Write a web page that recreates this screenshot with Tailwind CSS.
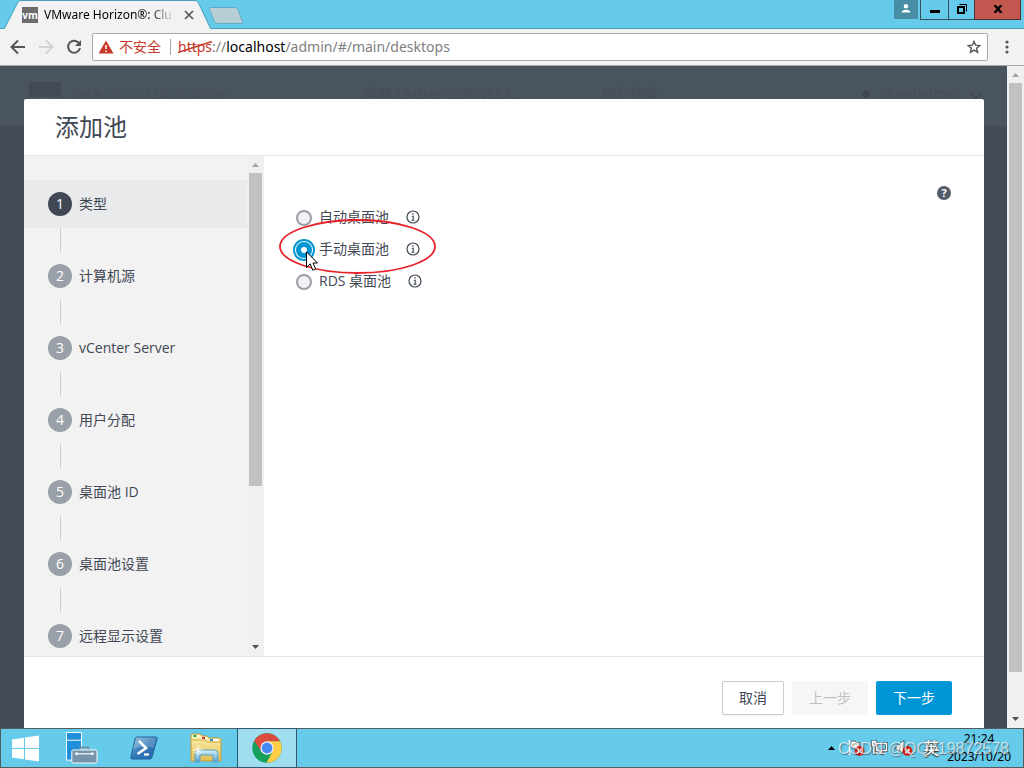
<!DOCTYPE html>
<html lang="zh-CN">
<head>
<meta charset="utf-8">
<title>VMware Horizon®: Cluster</title>
<script src="https://cdn.jsdelivr.net/npm/@tailwindcss/browser@4"></script>
</head>
<body class="flex h-screen flex-col overflow-hidden bg-[#66caea] font-['Open_Sans','Noto_Sans_CJK_SC',sans-serif] text-sm text-[#3f4854]">

<!-- Browser tab strip -->
<header class="relative flex h-7 shrink-0 items-start justify-between">
  <svg class="absolute left-0 top-0 h-[29px] w-full" aria-hidden="true">
    <path d="M-2 28.500H4.500L18 2Q19 .5 21 .5H195Q197.500 .5 198.500 3L210.500 28.500H3000V32H-2Z" fill="#f2f2f2" stroke="#4a9fbd"/>
    <path d="M211 7.500H235Q237 7.500 238 9.500L242.500 21.500Q243 23.500 241 23.500H217.500Q215.500 23.500 214.500 21.500L209.500 9.500Q209 7.500 211 7.500Z" fill="#b8ced6" stroke="#5fabc5"/>
  </svg>
  <div class="relative flex h-7 items-center pl-[22px] pt-0.5">
    <div class="flex size-4 items-center justify-center bg-[#6c6c6c] font-['Open_Sans',sans-serif] text-[10px] font-bold text-white">vm</div>
    <div class="ml-1.5 w-[131px] overflow-hidden whitespace-nowrap bg-linear-to-r from-black from-80% to-transparent bg-clip-text font-['Noto_Sans',sans-serif] text-xs text-transparent">VMware Horizon®: Clu</div>
    <button class="ml-[9px] size-2.5" aria-label="关闭标签页"><svg viewBox="0 0 10 10" stroke="#555" stroke-width="1.700"><path d="M1 1l8 8M9 1l-8 8"/></svg></button>
  </div>
  <div class="relative flex pr-[3px]">
    <button class="mr-0.5 flex h-[19px] w-6 justify-center bg-[#478ea5] pt-1" aria-label="用户"><svg class="size-2.5" viewBox="0 0 10 10" fill="#fff"><circle cx="5" cy="2.200" r="2.200"/><path d="M.5 8.500Q1 5.700 5 5.700T9.500 8.500Z"/></svg></button>
    <button class="flex h-5 w-[29px] justify-center border border-t-0 border-[#31515d] pt-2.5" aria-label="最小化"><span class="h-[3px] w-2.5 bg-black"></span></button>
    <button class="flex h-5 w-[25px] justify-center border-b border-[#31515d] pt-1" aria-label="还原"><svg class="size-2.5" viewBox="0 0 10 10" fill="none" stroke="#000"><path d="M1 3h6v6H1Z" stroke-width="2"/><path d="M2.500 .5h7v7"/></svg></button>
    <button class="flex h-5 w-[47px] justify-center border border-t-0 border-[#4b3433] bg-[#c35850] pt-[5px]" aria-label="关闭"><svg class="h-2 w-2.5" viewBox="0 0 10 8" stroke="#000" stroke-width="2.300"><path d="M1.500 0l7 8M8.500 0l-7 8"/></svg></button>
  </div>
</header>

<!-- Address bar -->
<nav class="flex h-[38px] shrink-0 items-center border-b border-[#aaa] bg-[#f2f2f2] pl-2.5 pr-[13px] [clip-path:inset(1px_0_0_0)]">
  <button aria-label="后退"><svg class="size-4" viewBox="0 0 16 16" fill="none" stroke="#555" stroke-width="2"><path d="M15 8H2M8 1.500L1.500 8L8 14.500"/></svg></button>
  <button class="ml-3" aria-label="前进" disabled><svg class="size-4" viewBox="0 0 16 16" fill="none" stroke="#d2d2d2" stroke-width="2"><path d="M1 8H14M8 1.500L14.500 8L8 14.500"/></svg></button>
  <button class="ml-3" aria-label="刷新"><svg class="size-4" viewBox="0 0 16 16" fill="none" stroke="#555" stroke-width="2"><path d="M13.200 4.500A6 6 0 1 0 14 9"/><path d="M15 1v6H9Z" fill="#555" stroke="none"/></svg></button>
  <div class="ml-2.5 flex h-7 flex-1 items-center rounded-xs border border-[#a8a8a8] bg-white pl-[5px] pr-1.5">
    <svg class="h-3.5 w-4" viewBox="0 0 16 14"><path d="M8 0.500L15.500 13.500H.5Z" fill="#c5392a"/><path d="M8 5v4M8 10.500v1.500" stroke="#fff" stroke-width="1.500"/></svg>
    <span class="ml-[5px] text-[#c5392a]">不安全</span>
    <span class="ml-[9px] h-4 w-px bg-[#aaa]"></span>
    <span class="relative ml-[7px] whitespace-nowrap font-['Noto_Sans',sans-serif] text-[#808080]"><span class="text-[#c5392a]">https</span>://<span class="text-black">localhost</span>/admin/#/main/desktops<svg class="absolute left-0 top-1 h-3 w-9" viewBox="0 0 36 12" stroke="#c5392a" stroke-width="1.600"><path d="M0 11.500L34 .5"/></svg></span>
    <button class="ml-auto" aria-label="收藏"><svg class="size-3.5" viewBox="0 0 14 14" fill="none" stroke="#555" stroke-width="1.400"><path d="M7 1.500L8.600 5.200L12.800 5.500L9.600 8.200L10.600 12.300L7 10.100L3.400 12.300L4.400 8.200L1.200 5.500L5.400 5.200Z"/></svg></button>
  </div>
  <button class="ml-[15px] w-2" aria-label="菜单"><svg viewBox="0 0 8 14" fill="#555"><circle cx="4" cy="2" r="1.600"/><circle cx="4" cy="7" r="1.600"/><circle cx="4" cy="12" r="1.600"/></svg></button>
</nav>

<!-- Page -->
<main class="flex min-h-0 flex-1">
  <div class="relative flex min-w-0 flex-1 flex-col bg-[#434c56] pl-6 pr-[23px] pt-[33px]">
    <!-- Dimmed application header behind the dialog -->
    <div class="absolute inset-x-0 top-0 flex h-[60px] items-start overflow-hidden bg-[#4a545e] pl-[29px] pt-4 text-[#444d58]" aria-hidden="true">
      <div class="flex size-8 items-end justify-center rounded-xs bg-[#424b55] pb-1.5 text-xs font-bold text-[#525c66]">vmw</div>
      <div class="ml-3 w-[291px] pt-0.5 text-lg">VMware Horizon®</div>
      <div class="w-[238px] pt-0.5 text-sm">容器 Cluster-CONNECT...</div>
      <div class="w-[257px] pt-0.5 text-sm">用户搜索</div>
      <svg class="mt-2 size-3.5" viewBox="0 0 14 14" fill="#3d4650"><circle cx="7" cy="4" r="3.500"/><path d="M1 13q0-4 6-4t6 4Z"/></svg>
      <div class="ml-2 pt-0.5 text-sm">cloudadmin</div>
      <svg class="ml-3 mt-2 h-3 w-3" viewBox="0 0 12 12" fill="none" stroke="#3d4650" stroke-width="1.500"><path d="M1 3l5 5l5-5"/></svg>
    </div>

    <section role="dialog" aria-labelledby="title" class="relative flex min-h-0 flex-1 flex-col rounded-t-xs bg-white">
      <h1 id="title" class="flex h-14 shrink-0 items-center pl-[31px] text-2xl font-normal">添加池</h1>
      <div class="flex min-h-0 flex-1 border-y border-[#e6e6e6]">
        <!-- Wizard steps -->
        <aside class="flex w-60 shrink-0 bg-[#f2f2f2]">
          <ol class="flex-1 overflow-hidden pt-6">
            <li class="flex h-12 items-center gap-[7px] bg-[#e8eaeb] pl-6"><span class="flex size-6 items-center justify-center rounded-full bg-[#3f4854] font-medium text-white">1</span><a href="#type">类型</a></li>
            <li class="ml-9 h-6 border-l border-[#ccc]"></li>
            <li class="flex h-12 items-center gap-[7px] pl-6"><span class="flex size-6 items-center justify-center rounded-full bg-[#9aa0a7] font-medium text-white">2</span><a href="#source">计算机源</a></li>
            <li class="ml-9 h-6 border-l border-[#ccc]"></li>
            <li class="flex h-12 items-center gap-[7px] pl-6"><span class="flex size-6 items-center justify-center rounded-full bg-[#9aa0a7] font-medium text-white">3</span><a href="#vcenter">vCenter Server</a></li>
            <li class="ml-9 h-6 border-l border-[#ccc]"></li>
            <li class="flex h-12 items-center gap-[7px] pl-6"><span class="flex size-6 items-center justify-center rounded-full bg-[#9aa0a7] font-medium text-white">4</span><a href="#users">用户分配</a></li>
            <li class="ml-9 h-6 border-l border-[#ccc]"></li>
            <li class="flex h-12 items-center gap-[7px] pl-6"><span class="flex size-6 items-center justify-center rounded-full bg-[#9aa0a7] font-medium text-white">5</span><a href="#id">桌面池 ID</a></li>
            <li class="ml-9 h-6 border-l border-[#ccc]"></li>
            <li class="flex h-12 items-center gap-[7px] pl-6"><span class="flex size-6 items-center justify-center rounded-full bg-[#9aa0a7] font-medium text-white">6</span><a href="#settings">桌面池设置</a></li>
            <li class="ml-9 h-6 border-l border-[#ccc]"></li>
            <li class="flex h-12 items-center gap-[7px] pl-6"><span class="flex size-6 items-center justify-center rounded-full bg-[#9aa0a7] font-medium text-white">7</span><a href="#display">远程显示设置</a></li>
          </ol>
          <div class="flex w-[17px] flex-col items-center bg-[#f0f0f0]">
            <svg class="h-[17px] w-[7px] shrink-0" viewBox="0 0 7 17" fill="#a3a3a3"><path d="M0 11L3.500 7L7 11Z"/></svg>
            <div class="h-[313px] w-[13px] bg-[#c1c1c1]"></div>
            <svg class="mt-auto h-[17px] w-[7px] shrink-0" viewBox="0 0 7 17" fill="#505050"><path d="M0 6L3.500 10L7 6Z"/></svg>
          </div>
        </aside>

        <!-- Pool type -->
        <div class="relative flex flex-1 justify-between pl-8 pr-[33px] pt-[30px]">
          <fieldset class="flex flex-col pt-[15px]">
            <div class="flex h-8 items-center">
              <input id="auto" name="pool" type="radio" class="mt-0.5 size-4 appearance-none rounded-full border-2 border-[#9a9fa7] bg-[#f2f2f2]">
              <label for="auto" class="ml-[7px] mr-[17px]">自动桌面池</label>
              <button aria-label="自动桌面池信息"><svg class="size-3.5" viewBox="0 0 14 14" fill="none" stroke="#3f4854"><circle cx="7" cy="7" r="6" stroke-width="1.200"/><path d="M5.800 6.200H7.200V10M5.500 10.300h3M6.200 3.900h1.500" stroke-width="1.100"/></svg></button>
            </div>
            <div class="flex h-8 items-center">
              <input id="manual" name="pool" type="radio" checked class="mt-0.5 size-4 appearance-none rounded-full border-[5px] border-[#0095d3] bg-white shadow-[0_0_0_1px_#fff,0_0_0_3px_#0095d3]">
              <label for="manual" class="ml-[7px] mr-[17px]">手动桌面池</label>
              <button aria-label="手动桌面池信息"><svg class="size-3.5" viewBox="0 0 14 14" fill="none" stroke="#3f4854"><circle cx="7" cy="7" r="6" stroke-width="1.200"/><path d="M5.800 6.200H7.200V10M5.500 10.300h3M6.200 3.900h1.500" stroke-width="1.100"/></svg></button>
            </div>
            <div class="flex h-8 items-center">
              <input id="rds" name="pool" type="radio" class="mt-0.5 size-4 appearance-none rounded-full border-2 border-[#9a9fa7] bg-[#f2f2f2]">
              <label for="rds" class="ml-[7px] mr-[17px]">RDS 桌面池</label>
              <button aria-label="RDS 桌面池信息"><svg class="size-3.5" viewBox="0 0 14 14" fill="none" stroke="#3f4854"><circle cx="7" cy="7" r="6" stroke-width="1.200"/><path d="M5.800 6.200H7.200V10M5.500 10.300h3M6.200 3.900h1.500" stroke-width="1.100"/></svg></button>
            </div>
          </fieldset>
          <button class="flex size-3.5 items-center justify-center rounded-full bg-[#545c67] text-[11px] font-bold text-white" aria-label="帮助">?</button>
          <svg class="pointer-events-none absolute left-3.5 top-[62px] h-14 w-40" viewBox="0 0 160 56" fill="none" aria-hidden="true"><ellipse cx="79.500" cy="28.500" rx="77.500" ry="26.500" stroke="#e8212a" stroke-width="1.800"/></svg>
          <svg class="pointer-events-none absolute left-[42px] top-[95px] h-[21px] w-3" viewBox="0 0 12 21" aria-hidden="true"><path d="M.5 .8V16.500L4.200 12.800L6.800 19.200L9.600 18L7 12H11.500Z" fill="#fff" stroke="#000"/></svg>
        </div>
      </div>
      <footer class="flex h-[71px] shrink-0 items-start justify-end gap-2 pr-8 pt-6">
        <button class="h-[34px] rounded-xs border border-[#ccc] bg-white px-4 shadow-xs">取消</button>
        <button class="h-[34px] rounded-xs bg-[#f6f6f6] px-[17px] text-[#bfc1c4]" disabled>上一步</button>
        <button class="h-[34px] rounded-xs bg-[#0095d6] px-[17px] text-white">下一步</button>
      </footer>
    </section>
  </div>
  <div class="flex w-[17px] shrink-0 flex-col items-center bg-[#f0f0f0]">
    <svg class="h-[17px] w-[7px] shrink-0" viewBox="0 0 7 17" fill="#a3a3a3"><path d="M0 11L3.500 7L7 11Z"/></svg>
    <div class="mb-[39px] w-[13px] flex-1 bg-[#c1c1c1]"></div>
    <svg class="h-[17px] w-[7px] shrink-0" viewBox="0 0 7 17" fill="#505050"><path d="M0 6L3.500 10L7 6Z"/></svg>
  </div>
</main>

<!-- Windows taskbar -->
<footer class="relative flex h-10 shrink-0 items-center border border-[#555c60] bg-[#66caea]">
  <button class="ml-[11px]" aria-label="开始"><svg class="h-[27px] w-7" viewBox="0 0 28 27" fill="#fff"><path d="M0 4.500L12 2.700V13H0ZM13 2.500L27 .5V13H13ZM0 14H12V24.300L0 22.500ZM13 14H27V26.500L13 24.500Z"/></svg></button>
  <button class="ml-[26px]" aria-label="服务器管理器"><svg class="size-8" viewBox="0 0 33 33" stroke="#fff"><path d="M.5 .5H16V29H.5Z" fill="#2090db"/><path d="M.5 8.500H16"/><path d="M15 19v-3h8v3" fill="none" stroke="#7494aa" stroke-width="2"/><rect x="6" y="18.500" width="26" height="13.500" rx="1.500" fill="#7494aa"/><path d="M9 22.500H29" stroke-width="1.200"/><path d="M11 21v3M27 21v3" stroke-width="1.500"/></svg></button>
  <button class="ml-8" aria-label="PowerShell"><svg class="h-6 w-7" viewBox="0 0 28 24"><defs><linearGradient id="ps" x1="0" x2="1" y1="0" y2="1"><stop stop-color="#8ebedd"/><stop offset=".5" stop-color="#3178b7"/><stop offset="1" stop-color="#2760ac"/></linearGradient></defs><path d="M7 1H26Q27.500 1 27 3L22 21Q21.500 23 20 23H2Q.5 23 1 21L5 3Q5.500 1 7 1Z" fill="url(#ps)" stroke="#20639c"/><path d="M7 1.500H26.500L23.500 12Q12 9 2.500 13Z" fill="#fff" opacity=".2"/><path d="M9 5L16 12L7.500 18" fill="none" stroke="#fff" stroke-width="2.600"/><path d="M14 18.500H19" stroke="#fff" stroke-width="2.300"/></svg></button>
  <button class="ml-8" aria-label="文件资源管理器"><svg class="h-[30px] w-8" viewBox="0 0 32 30"><defs><linearGradient id="fo" x2="0" y2="1"><stop stop-color="#fff4b5"/><stop offset="1" stop-color="#e4be51"/></linearGradient><linearGradient id="st" x2="0" y2="1"><stop stop-color="#d7f2fc"/><stop offset="1" stop-color="#559fc9"/></linearGradient></defs><path d="M1 5V2Q1 1 2 1H10L12 3H17L19 5H29Q31 5 31 7V28H1Z" fill="url(#fo)" stroke="#c19b3d"/><path d="M3 2H9V4H3ZM11 4H17V6H11ZM20 6H28V8H20Z" fill="#fff"/><path d="M3.500 2h3v2h-3Z" fill="#20ab3c"/><path d="M12 4h3v2h-3Z" fill="#d43d2f"/><path d="M20 6h3v2h-3Z" fill="#278bd2"/><path d="M1 7H15L17 9H31" fill="none" stroke="#d2ae4a"/><path d="M5 29V21Q5 17 9 17H24Q28 17 28 21V29H23V22H10V29Z" fill="url(#st)" stroke="#5ba1c5"/><path d="M8 12v10M3 17h10M5 14l6 6M11 14l-6 6" stroke="#fff" stroke-width=".8"/></svg></button>
  <button class="ml-[15px] flex h-10 w-[60px] items-center justify-center border border-[#30586b] bg-[#a0ddf1]" aria-label="Chrome"><svg class="size-[30px]" viewBox="0 0 30 30"><circle cx="15" cy="15" r="14.700" fill="#16a05d"/><path d="M2.300 7.650A14.700 14.700 0 0 1 27.700 7.650L28 8.300H15L9.200 18.350Z" fill="#dc4b3e"/><path d="M15 8.300H28.100A14.700 14.700 0 0 1 14.500 29.690L20.800 18.350Z" fill="#ffce45"/><circle cx="15" cy="15" r="6.700" fill="#f1f1f1"/><circle cx="15" cy="15" r="5.400" fill="#4688f4"/></svg></button>
  <div class="ml-auto flex items-center pr-3">
    <svg class="mr-3 h-1 w-[7px]" viewBox="0 0 7 4"><path d="M0 4L3.500 0L7 4Z"/></svg>
    <svg class="mr-1.5 h-[18px] w-[18px]" viewBox="0 0 18 18"><path d="M2.500 1V16M4 2h4l1 1.500h4V9H4Z" fill="#fff" stroke="#526b76"/><path d="M2.500 1V16" stroke="#fff" stroke-width="1.500"/><circle cx="12.500" cy="12" r="5" fill="#d6251c"/><path d="M10.500 10l4 4M14.500 10l-4 4" stroke="#fff" stroke-width="1.500"/></svg>
    <svg class="mr-1.5 h-4 w-[18px]" viewBox="0 0 18 16" fill="none"><path d="M5.500 3.500H15.500V10.500H5.500ZM8 13.500h6M10.500 11v2M1.500 1.500h3v4h-3ZM3 6v7h4" stroke="#46606b" stroke-width="3"/><path d="M5.500 3.500H15.500V10.500H5.500ZM8 13.500h6M10.500 11v2M1.500 1.500h3v4h-3ZM3 6v7h4" stroke="#fff" stroke-width="1.400"/></svg>
    <svg class="mr-2.5 h-[18px] w-[18px]" viewBox="0 0 18 18"><path d="M1 6h3l5-5v14L4 11H1Z" fill="#fff" stroke="#526b76"/><circle cx="12.500" cy="12" r="5" fill="#d6251c"/><path d="M10.500 10l4 4M14.500 10l-4 4" stroke="#fff" stroke-width="1.500"/></svg>
    <span class="mr-2 text-base font-medium text-white [text-shadow:0_0_2px_#333,0_1px_1px_#333]">英</span>
    <time class="text-center font-['Noto_Sans',sans-serif] text-xs leading-[18px] text-black">21:24<br>2023/10/20</time>
  </div>
  <div class="pointer-events-none absolute bottom-2.5 right-3.5 font-['Liberation_Sans',sans-serif] text-base leading-4 text-white/65 [text-shadow:1px_1px_1px_#0006]">CSDN @QQ719872578</div>
</footer>
</body>
</html>
